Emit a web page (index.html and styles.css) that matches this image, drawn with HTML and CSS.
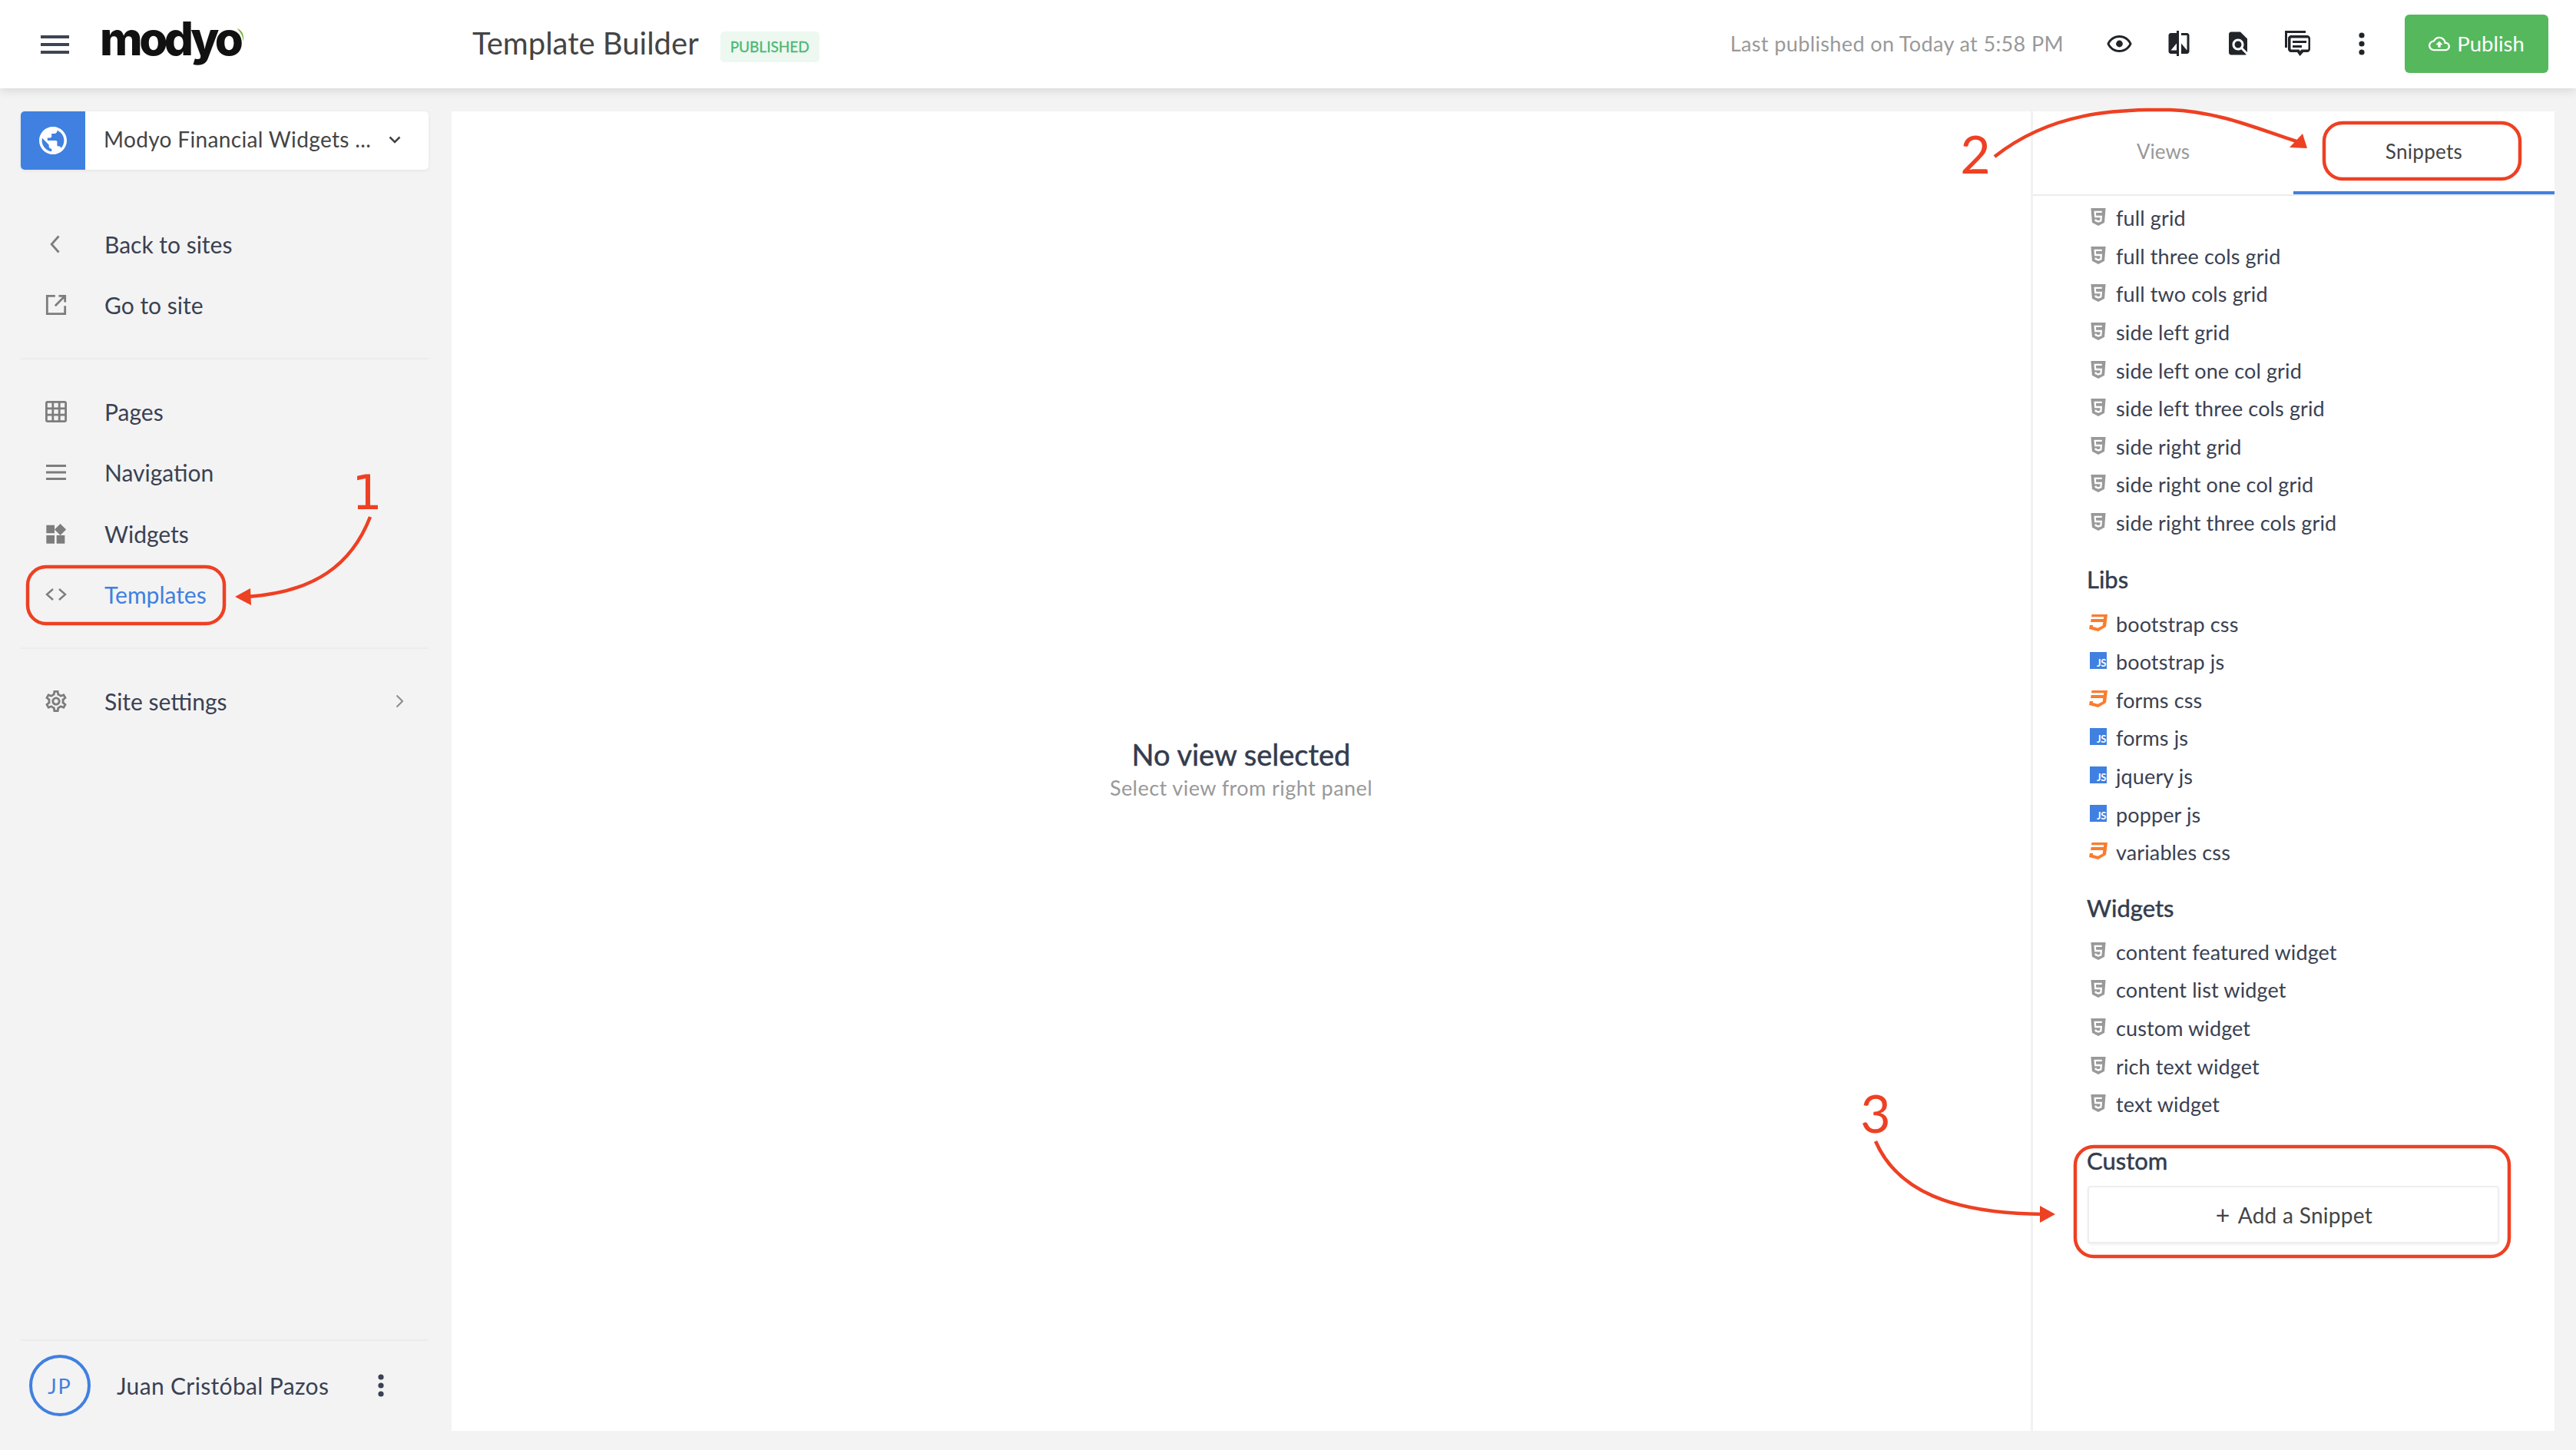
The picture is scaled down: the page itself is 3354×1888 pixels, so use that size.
FILE: index.html
```html
<!DOCTYPE html>
<html>
<head>
<meta charset="utf-8">
<title>Template Builder</title>
<link rel="stylesheet" href="styles.css">
</head>
<body>

<svg class="defs" width="0" height="0">
  <symbol id="i-html" viewBox="0 0 20 24">
    <path fill="#999" d="M0 0h20l-1.600 19.500L10 24l-8.400-4.500z"/>
    <path fill="none" stroke="#fff" stroke-width="2.400" d="M15 5H5.500l.5 6.500h8l-.5 5.500-3.500 1.200L6.500 17v-2"/>
  </symbol>
  <symbol id="i-css" viewBox="0 0 24 22">
    <path fill="#fb7c2c" d="M3.500 0H24l-2 16-10 6-12-3 .8-5h4.400l-.3 2 6.500 1.800 6.300-3.300.6-4.500H2l.7-4h16.100l.4-2.800H3z"/>
  </symbol>
  <symbol id="i-dots" viewBox="0 0 8 30">
    <circle cx="4" cy="4" r="3.600"/><circle cx="4" cy="15" r="3.600"/><circle cx="4" cy="26" r="3.600"/>
  </symbol>
</svg>

<header class="topbar">
  <svg class="burger" viewBox="0 0 37 24"><path d="M0 0h37v4H0zM0 10h37v4H0zM0 20h37v4H0z"/></svg>
  <div class="logo">modyo<svg class="logo-arc" viewBox="0 0 9 17"><path d="M0 0c6 2 10 8 8 17C8 10 5 5 0 0z"/></svg></div>
  <h1 class="page-title">Template Builder</h1>
  <span class="badge">PUBLISHED</span>
  <span class="last-published">Last published on Today at 5:58 PM</span>
  <div class="tools">
    <svg class="tool tool-eye" viewBox="1 4 22 15"><path d="M12 6c3.790 0 7.170 2.130 8.820 5.500C19.170 14.870 15.790 17 12 17s-7.170-2.130-8.820-5.500C4.830 8.130 8.210 6 12 6m0-2C7 4 2.730 7.110 1 11.500 2.730 15.890 7 19 12 19s9.270-3.110 11-7.500C21.270 7.110 17 4 12 4z"/><circle cx="12" cy="11.500" r="3"/></svg>
    <svg class="tool tool-compare" viewBox="3 1 18 22"><path d="M10 3H5c-1.100 0-2 .9-2 2v14c0 1.100.9 2 2 2h5v2h2V1h-2v2zm0 15H5l5-6v6zm9-15h-5v2h5v13l-5-6v9h5c1.100 0 2-.9 2-2V5c0-1.100-.9-2-2-2z"/></svg>
    <svg class="tool tool-find" viewBox="4 2 16 20"><path d="M20 19.590V8l-6-6H6c-1.100 0-1.990.9-1.990 2L4 20c0 1.100.89 2 1.990 2H18c.45 0 .85-.15 1.190-.4l-4.430-4.430c-.8.52-1.740.83-2.760.83-2.760 0-5-2.240-5-5s2.240-5 5-5 5 2.240 5 5c0 1.020-.31 1.960-.83 2.750L20 19.590zM9 13c0 1.660 1.340 3 3 3s3-1.340 3-3-1.340-3-3-3-3 1.340-3 3z"/></svg>
    <svg class="tool tool-comments" viewBox="0 0 33 33"><path d="M0 0h27v3H3v19H0z"/><path fill-rule="evenodd" d="M8 6h21c2.200 0 4 1.800 4 4v14c0 2.200-1.800 4-4 4h-5l-4.500 5-3.500-5H8c-2.200 0-4-1.800-4-4V10c0-2.200 1.800-4 4-4zm.8 3.500c-1 0-1.300.4-1.300 1.300v12.400c0 .9.4 1.300 1.300 1.300h9.700l1.200 2 1.800-2h7.700c.9 0 1.300-.4 1.300-1.300V10.800c0-.9-.4-1.300-1.300-1.300z"/><path d="M10 13h18v3H10zM10 19h12v3H10z"/></svg>
    <svg class="tool tool-dots"><use href="#i-dots"/></svg>
  </div>
  <button class="publish">
    <svg class="publish-icon" viewBox="0 0 24 24"><path d="M19.350 10.040C18.670 6.590 15.640 4 12 4 9.110 4 6.600 5.640 5.350 8.040 2.340 8.360 0 10.910 0 14c0 3.310 2.690 6 6 6h13c2.760 0 5-2.240 5-5 0-2.640-2.050-4.780-4.650-4.960zM19 18H6c-2.210 0-4-1.790-4-4 0-2.050 1.530-3.760 3.560-3.970l1.070-.11.5-.95C8.080 7.140 9.940 6 12 6c2.620 0 4.880 1.860 5.390 4.430l.3 1.500 1.530.11c1.560.1 2.780 1.410 2.780 2.960 0 1.650-1.350 3-3 3zM8 13h2.550v3h2.900v-3H16l-4-4z"/></svg>
    Publish
  </button>
</header>

<div class="workspace">
  <aside class="sidebar">
    <div class="site-select">
      <span class="site-globe"><svg viewBox="2 2 20 20"><path d="M12 2C6.480 2 2 6.480 2 12s4.480 10 10 10 10-4.480 10-10S17.520 2 12 2zm-1 17.930c-3.950-.49-7-3.850-7-7.930 0-.62.08-1.210.21-1.790L9 15v1c0 1.100.9 2 2 2v1.930zm6.900-2.540c-.26-.81-1-1.390-1.900-1.390h-1v-3c0-.55-.45-1-1-1H8v-2h2c.55 0 1-.45 1-1V7h2c1.100 0 2-.9 2-2v-.41c2.930 1.190 5 4.060 5 7.410 0 2.080-.8 3.970-2.100 5.390z"/></svg></span>
      <span class="site-name">Modyo Financial Widgets ...</span>
      <svg class="site-caret" viewBox="0 0 16 10"><path d="M1.500 1.500L8 8l6.500-6.500"/></svg>
    </div>

    <nav class="nav-group nav-first">
      <a class="nav-item"><svg class="nav-icon line" viewBox="0 0 24 24"><path d="M15 3l-8 9 8 9"/></svg>Back to sites</a>
      <a class="nav-item"><svg class="nav-icon line" viewBox="0 0 24 24"><path d="M11 2H2v20h20v-9M11 13L22 2M15 2h7v7"/></svg>Go to site</a>
    </nav>
    <nav class="nav-group">
      <a class="nav-item"><svg class="nav-icon" viewBox="2 2 20 20"><path d="M20 2H4c-1.100 0-2 .9-2 2v16c0 1.100.9 2 2 2h16c1.100 0 2-.9 2-2V4c0-1.100-.9-2-2-2zM8 20H4v-4h4v4zm0-6H4v-4h4v4zm0-6H4V4h4v4zm6 12h-4v-4h4v4zm0-6h-4v-4h4v4zm0-6h-4V4h4v4zm6 12h-4v-4h4v4zm0-6h-4v-4h4v4zm0-6h-4V4h4v4z"/></svg>Pages</a>
      <a class="nav-item"><svg class="nav-icon" viewBox="0 0 28 28"><path d="M1 4h26v3H1zM1 12.500h26v3H1zM1 21h26v3H1z"/></svg>Navigation</a>
      <a class="nav-item"><svg class="nav-icon" viewBox="2 1 21 21"><path d="M13 13v8h8v-8h-8zM3 21h8v-8H3v8zM3 3v8h8V3H3zm13.660-1.310L11 7.340 16.660 13l5.660-5.660-5.660-5.650z"/></svg>Widgets</a>
      <a class="nav-item active"><svg class="nav-icon line" viewBox="0 0 28 28"><path d="M10 7l-8 7 8 7M18 7l8 7-8 7"/></svg>Templates</a>
    </nav>
    <nav class="nav-group nav-last">
      <a class="nav-item"><svg class="nav-icon" viewBox="2 2 20 20"><path d="M19.430 12.980c.04-.32.07-.64.07-.98 0-.34-.03-.66-.07-.98l2.110-1.650c.19-.15.24-.42.12-.64l-2-3.460c-.09-.16-.26-.25-.44-.25-.06 0-.12.01-.17.03l-2.490 1c-.52-.4-1.080-.73-1.690-.98l-.38-2.650C14.460 2.180 14.250 2 14 2h-4c-.25 0-.46.18-.49.42l-.38 2.650c-.61.25-1.170.59-1.690.98l-2.490-1c-.06-.02-.12-.03-.18-.03-.17 0-.34.09-.43.25l-2 3.460c-.13.22-.07.49.12.64l2.110 1.650c-.04.32-.07.65-.07.98 0 .33.03.66.07.98l-2.110 1.650c-.19.15-.24.42-.12.64l2 3.460c.09.16.26.25.44.25.06 0 .12-.01.17-.03l2.490-1c.52.4 1.080.73 1.690.98l.38 2.650c.03.24.24.42.49.42h4c.25 0 .46-.18.49-.42l.38-2.650c.61-.25 1.170-.59 1.690-.98l2.490 1c.06.02.12.03.18.03.17 0 .34-.09.43-.25l2-3.460c.12-.22.07-.49-.12-.64l-2.110-1.650zm-1.980-1.710c.04.31.05.52.05.73 0 .21-.02.43-.05.73l-.14 1.130.89.7 1.080.84-.7 1.210-1.270-.51-1.040-.42-.9.68c-.43.32-.84.56-1.250.73l-1.060.43-.16 1.130-.2 1.350h-1.400l-.19-1.350-.16-1.130-1.060-.43c-.43-.18-.83-.41-1.230-.71l-.91-.7-1.060.43-1.270.51-.7-1.210 1.080-.84.89-.7-.14-1.130c-.03-.31-.05-.54-.05-.74s.02-.43.05-.73l.14-1.130-.89-.7-1.080-.84.7-1.210 1.270.51 1.040.42.9-.68c.43-.32.84-.56 1.250-.73l1.060-.43.16-1.130.2-1.350h1.390l.19 1.350.16 1.130 1.060.43c.43.18.83.41 1.230.71l.91.7 1.060-.43 1.270-.51.7 1.210-1.070.85-.89.7.14 1.130zM12 8c-2.210 0-4 1.790-4 4s1.790 4 4 4 4-1.790 4-4-1.790-4-4-4zm0 6c-1.100 0-2-.9-2-2s.9-2 2-2 2 .9 2 2-.9 2-2 2z"/></svg>Site settings<svg class="nav-more" viewBox="0 0 10 18"><path d="M1.500 1.500L9 9l-7.500 7.500"/></svg></a>
    </nav>

    <div class="user">
      <span class="avatar">JP</span>
      <span class="user-name">Juan Cristóbal Pazos</span>
      <svg class="user-dots"><use href="#i-dots"/></svg>
    </div>
  </aside>

  <main class="canvas">
    <section class="preview">
      <h2 class="empty-title">No view selected</h2>
      <p class="empty-text">Select view from right panel</p>
    </section>

    <section class="panel">
      <div class="tabs">
        <a class="tab">Views</a>
        <a class="tab tab-active">Snippets</a>
      </div>
      <div class="snippets">
        <ul class="snippet-list">
          <li><svg class="ic-html"><use href="#i-html"/></svg>full grid</li>
          <li><svg class="ic-html"><use href="#i-html"/></svg>full three cols grid</li>
          <li><svg class="ic-html"><use href="#i-html"/></svg>full two cols grid</li>
          <li><svg class="ic-html"><use href="#i-html"/></svg>side left grid</li>
          <li><svg class="ic-html"><use href="#i-html"/></svg>side left one col grid</li>
          <li><svg class="ic-html"><use href="#i-html"/></svg>side left three cols grid</li>
          <li><svg class="ic-html"><use href="#i-html"/></svg>side right grid</li>
          <li><svg class="ic-html"><use href="#i-html"/></svg>side right one col grid</li>
          <li><svg class="ic-html"><use href="#i-html"/></svg>side right three cols grid</li>
        </ul>
        <h3 class="snippet-head">Libs</h3>
        <ul class="snippet-list">
          <li><svg class="ic-css"><use href="#i-css"/></svg>bootstrap css</li>
          <li><span class="ic-js">JS</span>bootstrap js</li>
          <li><svg class="ic-css"><use href="#i-css"/></svg>forms css</li>
          <li><span class="ic-js">JS</span>forms js</li>
          <li><span class="ic-js">JS</span>jquery js</li>
          <li><span class="ic-js">JS</span>popper js</li>
          <li><svg class="ic-css"><use href="#i-css"/></svg>variables css</li>
        </ul>
        <h3 class="snippet-head head-widgets">Widgets</h3>
        <ul class="snippet-list">
          <li><svg class="ic-html"><use href="#i-html"/></svg>content featured widget</li>
          <li><svg class="ic-html"><use href="#i-html"/></svg>content list widget</li>
          <li><svg class="ic-html"><use href="#i-html"/></svg>custom widget</li>
          <li><svg class="ic-html"><use href="#i-html"/></svg>rich text widget</li>
          <li><svg class="ic-html"><use href="#i-html"/></svg>text widget</li>
        </ul>
        <h3 class="snippet-head">Custom</h3>
        <button class="add-snippet"><span class="plus">+</span>Add a Snippet</button>
      </div>
    </section>
  </main>
</div>

<!-- red notes drawn over the screenshot -->
<svg class="notes" viewBox="0 0 3354 1888">
  <rect x="36" y="738" width="256" height="74" rx="24"/>
  <rect x="3026" y="160" width="255" height="73" rx="24"/>
  <rect x="2702" y="1493" width="565" height="143" rx="24"/>
  <path d="M482 673C458 735 410 771 322 777"/>
  <path d="M2597 204C2670 146 2755 142 2825 143C2890 145 2945 170 2990 184"/>
  <path d="M2442 1486C2470 1550 2540 1580 2660 1581"/>
  <polygon points="306,777 326,766 327,788"/>
  <polygon points="3004,193 2981,192 2998,174"/>
  <polygon points="2676,1581 2656,1570 2656,1592"/>
  <text class="note-num note-one" x="478" y="663">1</text>
  <text class="note-num" x="2572" y="226">2</text>
  <text class="note-num" x="2442" y="1475">3</text>
</svg>

</body>
</html>
```

FILE: styles.css
```css
html, body {
	margin: 0;
	height: 100%;
}
body {
	display: flex;
	flex-direction: column;
	height: 1888px;
	overflow: hidden;
	position: relative;
	background: #f3f3f3;
	color: #3a4152;
	font-family: "Lato", "Noto Sans", sans-serif;
	font-size: 27px;
}
.defs {
	position: absolute;
}
h1, h2, h3, p, ul {
	margin: 0;
	padding: 0;
	font-weight: normal;
}
ul {
	list-style: none;
}

/* top bar */
.topbar {
	display: flex;
	align-items: center;
	flex: none;
	height: 115px;
	padding-right: 36px;
	background: #fff;
	box-shadow: 0 3px 12px rgba(0,0,0,.12);
	position: relative;
	z-index: 2;
}
.burger {
	width: 37px;
	height: 24px;
	margin-left: 53px;
	fill: #3c4454;
}
.logo {
	margin-left: 40px;
	width: 190px;
	font-family: "Inter", sans-serif;
	font-size: 60px;
	font-weight: 800;
	letter-spacing: -4.500px;
	line-height: 60px;
	color: #111;
	position: relative;
	top: -8px;
}
.logo-arc {
	position: absolute;
	left: 178px;
	top: 17px;
	width: 10px;
	height: 17px;
	fill: #6aae2a;
}
.page-title {
	margin-left: 295px;
	font-size: 40px;
	color: #444;
	position: relative;
	top: -2px;
}
.badge {
	margin-left: 28px;
	height: 40px;
	line-height: 40px;
	padding: 0 13px;
	border-radius: 5px;
	background: #edf8f1;
	color: #4cb772;
	font-size: 19px;
	-webkit-text-stroke: .3px;
	position: relative;
	top: 3px;
}
.last-published {
	margin-left: auto;
	color: #999;
	font-size: 27px;
	letter-spacing: .38px;
	position: relative;
	top: -1px;
}
.tools {
	display: flex;
	align-items: center;
	margin-left: 56px;
	height: 40px;
	position: relative;
	top: -1px;
}
.tool {
	fill: #212529;
	height: 33px;
}
.tool-eye {
	width: 33px;
	height: 22px;
}
.tool-compare {
	width: 28px;
	margin-left: 47px;
}
.tool-find {
	width: 24px;
	height: 31px;
	margin-left: 51px;
}
.tool-comments {
	width: 33px;
	margin-left: 49px;
}
.tool-dots {
	width: 8px;
	height: 30px;
	margin-left: 63px;
}
.publish {
	display: flex;
	align-items: center;
	justify-content: center;
	margin-left: 52px;
	width: 187px;
	height: 76px;
	border: 0;
	border-radius: 6px;
	background: #55b85c;
	color: #fff;
	font-family: inherit;
	font-size: 27.500px;
	position: relative;
	top: -1px;
}
.publish-icon {
	width: 28px;
	height: 28px;
	margin-right: 9px;
	fill: #fff;
}

/* sidebar */
.workspace {
	display: flex;
	flex: 1;
	min-height: 0;
}
.sidebar {
	display: flex;
	flex-direction: column;
	flex: none;
	box-sizing: border-box;
	width: 588px;
	padding: 30px 30px 0 27px;
}
.site-select {
	display: flex;
	align-items: center;
	flex: none;
	height: 76px;
	border-radius: 5px;
	background: #fff;
	box-shadow: 0 1px 4px rgba(0,0,0,.07);
	overflow: hidden;
}
.site-globe {
	display: flex;
	align-items: center;
	justify-content: center;
	width: 84px;
	height: 100%;
	background: #4080e0;
}
.site-globe svg {
	width: 36px;
	height: 36px;
	fill: #fff;
}
.site-name {
	margin: -4px 0 0 24px;
	color: #444;
	font-size: 28px;
	letter-spacing: .35px;
	white-space: nowrap;
}
.site-caret {
	width: 16px;
	height: 10px;
	margin: -2px 36px 0 auto;
	fill: none;
	stroke: #444;
	stroke-width: 2.500;
}
.nav-group {
	display: flex;
	flex-direction: column;
	padding: 28px 0 29px;
	border-bottom: 2px solid #ececec;
}
.nav-first {
	margin-top: 29px;
}
.nav-last {
	border-bottom: 0;
}
.nav-item {
	display: flex;
	align-items: center;
	height: 79.500px;
	padding-left: 32px;
	color: #3a4152;
	font-size: 30px;
}
.nav-icon {
	flex: none;
	width: 28px;
	height: 28px;
	margin-right: 49px;
	fill: #7d7d7d;
}
.nav-icon.line {
	fill: none;
	stroke: #7d7d7d;
	stroke-width: 2.400;
}
.nav-item.active {
	color: #4080e0;
}
.nav-more {
	width: 10px;
	height: 18px;
	margin-left: auto;
	margin-right: 33px;
	fill: none;
	stroke: #8c8c8c;
	stroke-width: 2;
}
.user {
	display: flex;
	align-items: center;
	box-sizing: border-box;
	margin-top: auto;
	height: 144px;
	padding: 0 0 26px 11px;
	border-top: 2px solid #ececec;
	flex: none;
}
.avatar {
	display: flex;
	align-items: center;
	justify-content: center;
	box-sizing: border-box;
	width: 80px;
	height: 80px;
	border: 4px solid #4080e0;
	border-radius: 50%;
	color: #4080e0;
	font-size: 27px;
	letter-spacing: 2px;
}
.user-name {
	margin-left: 34px;
	font-size: 30px;
	letter-spacing: .35px;
}
.user-dots {
	width: 8px;
	height: 30px;
	margin-left: 64px;
	fill: #3a4152;
}

/* main area */
.canvas {
	display: flex;
	flex: 1;
	margin: 30px 28px 25px 0;
	background: #fff;
}
.preview {
	display: flex;
	flex-direction: column;
	align-items: center;
	justify-content: center;
	flex: 1;
	padding-bottom: 8px;
}
.empty-title {
	font-size: 38px;
	-webkit-text-stroke: .5px;
	color: #333c4d;
}
.empty-text {
	margin-top: 4px;
	color: #999;
	font-size: 27px;
	letter-spacing: .45px;
}
.panel {
	flex: none;
	box-sizing: border-box;
	width: 682px;
	border-left: 3px solid #f2f2f2;
}
.tabs {
	display: grid;
	grid-template-columns: 339px 340px;
	border-bottom: 2px solid #ececec;
}
.tab {
	display: flex;
	align-items: center;
	justify-content: center;
	box-sizing: border-box;
	height: 108px;
	border-bottom: 4px solid transparent;
	color: #999;
	font-size: 26px;
}
.tab-active {
	border-bottom-color: #4080e0;
	color: #444;
	letter-spacing: .3px;
}
.snippets {
	padding: 4px 72px 0;
}
.snippet-list li {
	display: flex;
	align-items: center;
	height: 49.600px;
	font-size: 27px;
	letter-spacing: .12px;
	white-space: nowrap;
}
.snippet-head {
	margin: 29px 0 13px -2px;
	height: 40px;
	line-height: 40px;
	font-size: 31px;
	-webkit-text-stroke: .5px;
	color: #333c4d;
}
.head-widgets {
	margin-top: 27px;
}
.ic-html {
	width: 20px;
	height: 23px;
	margin: -2px 13px 0 3px;
}
.ic-css {
	width: 24px;
	height: 22px;
	margin: -3px 11px 0 1px;
}
.ic-js {
	display: flex;
	align-items: flex-end;
	justify-content: flex-end;
	box-sizing: border-box;
	width: 22px;
	height: 22px;
	margin: -3px 12px 0 2px;
	padding-right: 1px;
	background: #4080e0;
	color: #fff;
	font-size: 13px;
	font-weight: 700;
	letter-spacing: -.3px;
	line-height: 16px;
}
.add-snippet {
	display: flex;
	align-items: center;
	justify-content: center;
	box-sizing: border-box;
	width: 536px;
	height: 75px;
	margin-left: -1px;
	padding-left: 8px;
	border: 2px solid #eee;
	border-radius: 4px;
	background: #fff;
	box-shadow: 0 2px 3px rgba(0,0,0,.06);
	color: #444;
	font-family: inherit;
	font-size: 28px;
	letter-spacing: .3px;
}
.plus {
	margin-right: 10px;
	font-size: 32px;
	line-height: 32px;
}

/* notes */
.notes {
	position: absolute;
	left: 0;
	top: 0;
	width: 3354px;
	height: 1888px;
	z-index: 3;
	pointer-events: none;
}
.notes rect, .notes path {
	fill: none;
	stroke: #ee4023;
	stroke-width: 4.500;
}
.notes polygon {
	fill: #ee4023;
}
.note-num {
	fill: #ee4023;
	font-family: "Lato", sans-serif;
	font-size: 68px;
	text-anchor: middle;
}
.note-one {
	font-family: "DejaVu Sans", sans-serif;
	font-size: 62px;
}
```
